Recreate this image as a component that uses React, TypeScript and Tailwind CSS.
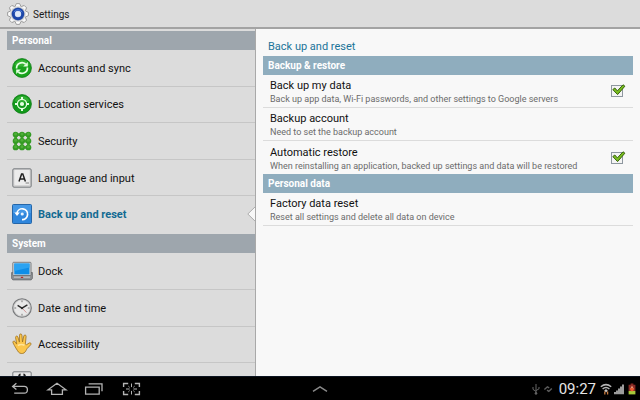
import { useState } from "react";
import type { ReactNode } from "react";

interface MenuItem {
  id: string;
  label: string;
  icon: ReactNode;
}

interface MenuSection {
  title: string;
  rows: string;
  items: MenuItem[];
}

function GearIcon() {
  const teeth = [0, 45, 90, 135, 180, 225, 270, 315];
  return (
    <svg viewBox="0 0 22 22" className="size-[22px] shrink-0" aria-hidden="true">
      <g fill="#fafafa" stroke="#8a8a8a" strokeWidth="0.8">
        {teeth.map((a) => (
          <path key={a} d="M7.6 4.4 9.4.6h3.2l1.8 3.8z" transform={`rotate(${a} 11 11)`} />
        ))}
      </g>
      <circle cx="11" cy="11" r="8.1" fill="#e2e2e2" />
      <circle cx="11" cy="11" r="6.8" fill="#a0a8b8" />
      <circle cx="11" cy="11" r="4.7" fill="#b9cdf0" stroke="#1c46a8" strokeWidth="3" />
      <path d="M6.8 9.4a4.6 4.6 0 0 1 8.4 0" fill="none" stroke="#4c7bdc" strokeWidth="1" />
      <circle cx="11" cy="11" r="2.8" fill="#dfe9f8" />
    </svg>
  );
}

function SyncIcon() {
  return (
    <svg viewBox="0 0 20 20" className="size-5" aria-hidden="true">
      <circle cx="10" cy="10" r="9.4" fill="#18a31c" stroke="#0c7a14" strokeWidth="0.8" />
      <path d="M2.5 7a8.2 8.2 0 0 1 15 0c-4 2-11 2-15 0" fill="#4fc44a" opacity="0.5" />
      <g fill="none" stroke="#e6ffe3" strokeWidth="1.7">
        <path d="M4.6 10.5A5.4 5.4 0 0 1 13.6 6" />
        <path d="M15.4 9.5A5.4 5.4 0 0 1 6.4 14" />
      </g>
      <path d="M15.8 4v4.6h-4.6zM4.2 16v-4.6h4.6z" fill="#e6ffe3" />
    </svg>
  );
}

function LocationIcon() {
  return (
    <svg viewBox="0 0 20 20" className="size-5" aria-hidden="true">
      <circle cx="10" cy="10" r="9.4" fill="#129a1b" stroke="#0c7a14" strokeWidth="0.8" />
      <path d="M2.5 7a8.2 8.2 0 0 1 15 0c-4 2-11 2-15 0" fill="#4fc44a" opacity="0.5" />
      <g fill="none" stroke="#e6ffe3">
        <circle cx="10" cy="10" r="4.6" strokeWidth="1.3" />
        <path d="M10 3v2.6M10 14.4V17M3 10h2.6M14.4 10H17" strokeWidth="2" />
      </g>
      <circle cx="10" cy="10" r="2.1" fill="#e6ffe3" />
    </svg>
  );
}

function SecurityIcon() {
  const points = [3.6, 10, 16.4];
  return (
    <svg viewBox="0 0 20 20" className="size-5" aria-hidden="true">
      <path
        d="M3.6 3.6h12.8v12.8H3.6zM10 3.6v12.8M3.6 10h12.8"
        fill="none"
        stroke="#46a52e"
        strokeWidth="2.8"
      />
      {points.map((y) =>
        points.map((x) => (
          <g key={`${x}-${y}`}>
            <circle cx={x} cy={y} r="2.9" fill="#349a24" />
            <circle cx={x} cy={y - 0.7} r="1.5" fill="#4fae38" />
          </g>
        ))
      )}
    </svg>
  );
}

function LanguageIcon() {
  return (
    <svg viewBox="0 0 20 20" className="size-5" aria-hidden="true">
      <rect x="0.8" y="0.8" width="18.4" height="18.4" rx="1.2" fill="#d4d4d4" stroke="#777b7f" />
      <rect x="2.4" y="2" width="15.2" height="15" rx="1" fill="#ececec" />
      <path d="M7 13.4 9.6 6h1.2l2.6 7.4M7.9 11h4.6" fill="none" stroke="#222" strokeWidth="1.5" />
      <path d="M13.6 15h3.4" stroke="#777" strokeWidth="0.9" />
    </svg>
  );
}

function BackupIcon() {
  return (
    <svg viewBox="0 0 20 20" className="size-5" aria-hidden="true">
      <rect x="0.5" y="0.5" width="19" height="19" rx="1" fill="#2f86dc" stroke="#2566a8" />
      <path d="M1 1h18v8H1z" fill="#55a5ec" opacity="0.6" />
      <path d="M4.9 9.2A5.4 5.4 0 1 1 10 15.6" fill="none" stroke="#fff" strokeWidth="1.7" />
      <path d="M2.4 8.4h5.4L5 12z" fill="#fff" />
      <circle cx="10.2" cy="10" r="1.6" fill="#e8f4ff" />
    </svg>
  );
}

function DockIcon() {
  return (
    <svg viewBox="0 0 22 20" className="h-5 w-[22px]" aria-hidden="true">
      <path d="M.6 11.5h20.8v5.8l-1.2 1.6H1.8L.6 17.3z" fill="#8d9094" stroke="#5c5f63" strokeWidth="0.7" />
      <rect x="1.8" y="1.3" width="18.2" height="13.2" rx="0.8" fill="#d5d8db" stroke="#63676b" strokeWidth="0.8" />
      <rect x="3.3" y="2.6" width="15.2" height="10.8" fill="#0f8ee8" />
      <path d="M3.3 2.6h15.2v4L3.3 10z" fill="#2ba3f2" />
      <path d="M3 15.4h16v1.6H3z" fill="#b4b7ba" />
      <path d="M9.8 16.4h2.4" stroke="#b3262a" strokeWidth="1.1" />
    </svg>
  );
}

function ClockIcon() {
  return (
    <svg viewBox="0 0 20 20" className="size-5" aria-hidden="true">
      <circle cx="10" cy="10" r="9.3" fill="#cdcdcd" stroke="#77797b" strokeWidth="1.1" />
      <circle cx="10" cy="10" r="7.8" fill="#e8e8e8" />
      <path d="M10 2.4v1.8M10 15.8v1.8M2.4 10h1.8M15.8 10h1.8" stroke="#777" strokeWidth="1" />
      <path d="M10 10.2 5.6 7.4M10 10.2l5.4-3.4" stroke="#2b2b2b" strokeWidth="1.4" />
      <path d="m10 10 4.4 4.6" stroke="#c98080" strokeWidth="0.8" />
      <circle cx="10" cy="10.1" r="1.2" fill="#2b2b2b" />
    </svg>
  );
}

function HandIcon() {
  return (
    <svg viewBox="0 0 20 22" className="h-[22px] w-5" aria-hidden="true">
      <path
        d="M6.6 19.2C4.8 16.8 2.8 13.4 1 9.8c-.7-1.5 1.2-2.4 2-1.2l1.7 2.5L3.6 4.6c-.3-1.7 1.9-2.1 2.3-.5l1.5 5L7.5 2.2c0-1.7 2.3-1.7 2.4 0l.6 6.8 1.3-6c.4-1.6 2.5-1.2 2.3.4l-.7 7.4c.2.9.8 1.2 1.4.7l2.4-1.5c1.4-.7 2.5.8 1.5 1.8l-3.6 3.8c-.9 1.3-1.4 3.2-3 4.3-1.6 1-4.2.8-5.5-.7z"
        fill="#fbc64c"
        stroke="#9c7020"
        strokeWidth="0.8"
      />
      <path d="M5.8 12.5c1.8-1 5-1.2 6.7-.2" fill="none" stroke="#ffe49a" strokeWidth="1.6" />
    </svg>
  );
}

function DeveloperIcon() {
  return (
    <svg viewBox="0 0 20 20" className="size-5" aria-hidden="true">
      <rect x="0.8" y="0.8" width="18.4" height="18.4" rx="1.2" fill="#e4e4e4" stroke="#777b7f" />
      <path
        d="M8.6 3.6c-3 0-.6 5.2-3.2 6.2 2.6 1 .2 6.2 3.2 6.2M11.4 3.6c3 0 .6 5.2 3.2 6.2-2.6 1-.2 6.2-3.2 6.2"
        fill="none"
        stroke="#222"
        strokeWidth="2"
      />
    </svg>
  );
}

const sections: MenuSection[] = [
  {
    title: "Personal",
    rows: "h-[182px]",
    items: [
      { id: "accounts", label: "Accounts and sync", icon: <SyncIcon /> },
      { id: "location", label: "Location services", icon: <LocationIcon /> },
      { id: "security", label: "Security", icon: <SecurityIcon /> },
      { id: "language", label: "Language and input", icon: <LanguageIcon /> },
      { id: "backup", label: "Back up and reset", icon: <BackupIcon /> },
    ],
  },
  {
    title: "System",
    rows: "h-[146px]",
    items: [
      { id: "dock", label: "Dock", icon: <DockIcon /> },
      { id: "date", label: "Date and time", icon: <ClockIcon /> },
      { id: "accessibility", label: "Accessibility", icon: <HandIcon /> },
      { id: "developer", label: "", icon: <DeveloperIcon /> },
    ],
  },
];

interface MenuRowProps {
  item: MenuItem;
  active: boolean;
  last: boolean;
  onSelect: (id: string) => void;
}

function MenuRow({ item, active, last, onSelect }: MenuRowProps) {
  return (
    <li className={`relative flex flex-1 ${last ? "" : "border-b border-[#c6c6c6]"}`}>
      <button
        type="button"
        aria-label={item.label || "Developer options"}
        onClick={() => onSelect(item.id)}
        className={`flex w-full items-center gap-[5px] pl-1 text-left text-[11px] leading-4 ${
          active ? "font-bold text-[#136a92]" : "text-[#111]"
        }`}
      >
        <span className="flex w-[22px] shrink-0 justify-center">{item.icon}</span>
        <span className="pt-0.5">{item.label}</span>
      </button>
      {active && (
        <svg
          viewBox="0 0 9 16"
          className="absolute top-1/2 -right-px h-4 w-[9px] -translate-y-1/2"
          aria-hidden="true"
        >
          <path d="M9 0 .8 8 9 16z" fill="#f8f8f8" />
          <path d="M9 0 .8 8 9 16" fill="none" stroke="#a5a5a5" strokeWidth="0.9" />
        </svg>
      )}
    </li>
  );
}

interface PreferenceProps {
  title: string;
  summary: string;
  border?: boolean;
}

function PreferenceText({ title, summary }: PreferenceProps) {
  return (
    <span className="block min-w-0 flex-1 pt-0.5 text-left">
      <span className="block text-[11px] leading-[14px] text-[#111]">{title}</span>
      <span className="block text-[9px] leading-3 text-[#6b6b6b]">{summary}</span>
    </span>
  );
}

function Preference({ title, summary, border = true }: PreferenceProps) {
  return (
    <button
      type="button"
      className={`flex h-[33px] w-full items-center px-[7px] ${border ? "border-b border-[#dcdcdc]" : ""}`}
    >
      <PreferenceText title={title} summary={summary} />
    </button>
  );
}

function CheckPreference({ title, summary, border = true }: PreferenceProps) {
  const [checked, setChecked] = useState(true);

  return (
    <label
      className={`flex h-[33px] items-center pr-1.5 pl-[7px] ${border ? "border-b border-[#dcdcdc]" : ""}`}
    >
      <PreferenceText title={title} summary={summary} />
      <span className="relative flex size-4 shrink-0 items-center">
        <input
          type="checkbox"
          checked={checked}
          onChange={(e) => setChecked(e.target.checked)}
          className="size-3 appearance-none border border-[#8e979f] bg-[#f4f4f4]"
        />
        {checked && (
          <svg
            viewBox="0 0 16 16"
            className="pointer-events-none absolute inset-0 size-4"
            aria-hidden="true"
          >
            <path
              d="M1.8 6.6 3.8 5l2.6 2.9L12 1.8l1.9 1.4-7.3 8.4z"
              fill="#79bd1f"
              stroke="#36610c"
              strokeWidth="1"
              strokeLinejoin="round"
            />
          </svg>
        )}
      </span>
    </label>
  );
}

function GroupTitle({ children }: { children: ReactNode }) {
  return (
    <h3 className="h-[19px] bg-[#8fadbe] px-[5px] text-[10px] leading-5 font-bold text-white">
      {children}
    </h3>
  );
}

function NavBar() {
  return (
    <footer className="grid h-6 shrink-0 grid-cols-[1fr_auto_1fr] items-center border-t border-[#0b1420] bg-black">
      <nav className="flex items-center gap-[15px] pl-[9px]">
        <button type="button" aria-label="Back">
          <svg viewBox="0 0 22 16" className="h-4 w-[22px]" fill="none" stroke="#b4b4b4" strokeWidth="1.3">
            <path d="M7.4 2.2 3.6 5.4l3.8 3.2M3.8 5.4h11.4q3.2 0 3.2 3.3 0 3.5-3.2 3.5H5.2" />
          </svg>
        </button>
        <button type="button" aria-label="Home">
          <svg viewBox="0 0 22 16" className="h-4 w-[22px]" fill="none" stroke="#b4b4b4" strokeWidth="1.3">
            <path d="M11 2.2 2 8.8h3.6v4.6h10.8V8.8H20z" />
          </svg>
        </button>
        <button type="button" aria-label="Recent apps">
          <svg viewBox="0 0 22 16" className="h-4 w-[22px]" fill="none" stroke="#b4b4b4" strokeWidth="1.3">
            <path d="M2.6 6.2h13.6v7H2.6zM5.6 2.8H19v7.4" />
          </svg>
        </button>
        <button type="button" aria-label="Screenshot">
          <svg viewBox="0 0 22 16" className="h-4 w-[22px]" fill="none" stroke="#b4b4b4" strokeWidth="1.4">
            <path d="M3.6 6V2.5h4.6M14.8 2.5h4.6V6M19.4 10v3.5h-4.6M8.2 13.5H3.6V10" />
            <path
              d="M11.5 2.5v3.6M11.5 9.9v3.6M6 8h3.6M13.4 8H17M8.4 5.2l1.2 1.1M14.6 5.2l-1.2 1.1M8.4 10.8l1.2-1.1M14.6 10.8l-1.2-1.1"
              strokeWidth="1"
            />
          </svg>
        </button>
      </nav>
      <button type="button" aria-label="Mini apps">
        <svg viewBox="0 0 16 8" className="h-2 w-4" fill="none" stroke="#8a8a8a" strokeWidth="1.4">
          <path d="m1 6.4 7-4.6 7 4.6" />
        </svg>
      </button>
      <div className="flex items-center justify-end gap-0.5 pr-1">
        <svg viewBox="0 0 10 12" className="h-3 w-2.5" fill="none" stroke="#666" aria-hidden="true">
          <path d="M5 1v10M2 4v2.4l3 2M8 4v1.8L5 7.6" />
          <circle cx="5" cy="10.4" r="0.9" fill="#666" />
        </svg>
        <svg viewBox="0 0 10 12" className="mr-1 h-3 w-2.5" fill="none" stroke="#5e5e5e" strokeWidth="1.4" aria-hidden="true">
          <path d="M1.4 6.6 4.4 3.8l1.8 1M8.8 5.4 5.8 8.4 4 7.2" />
        </svg>
        <time className="text-[15px] leading-5 text-[#e6e6e6]">09:27</time>
        <svg viewBox="0 0 12 12" className="ml-0.5 size-3" fill="none" aria-hidden="true">
          <path d="M.8 3.8q5.2-4.4 10.4 0M2.6 6q3.4-3 6.8 0" stroke="#b5b5b5" strokeWidth="1.5" />
          <path d="M6 6 7.8 7.8 6 9.6 4.2 7.8z" fill="#c5c5c5" />
          <path d="M4.8 11.6V8.6M7.6 8.4v3.2" stroke="#c97b3f" strokeWidth="1.3" />
        </svg>
        <svg viewBox="0 0 10 12" className="h-3 w-2.5" fill="#c4c4c4" aria-hidden="true">
          <path d="M.2 9h1.6v2.2H.2zM2.2 7.4h1.6v3.8H2.2zM4.2 5.4h1.6v5.8H4.2zM6.2 3.4h1.6v7.8H6.2zM8.2 1.4h1.6v9.8H8.2z" />
        </svg>
        <svg viewBox="0 0 8 12" className="ml-0.5 h-3 w-2" aria-hidden="true">
          <path d="M2.6.6h2.8v1.2h2V8H.6V1.8h2z" fill="#8a2a24" />
          <path d="M.6 8h6.8v3.4H.6z" fill="#a8c93a" />
          <path d="M4 2.4 2.2 6h3.6z" fill="#f0a080" />
          <circle cx="4" cy="6.6" r="1.8" fill="#ee5a2e" />
        </svg>
      </div>
    </footer>
  );
}

export default function App() {
  const [selected, setSelected] = useState("backup");

  return (
    <div className="flex h-screen flex-col overflow-hidden bg-[#dcdcdc] font-[Roboto,sans-serif]">
      <header className="flex h-[29px] shrink-0 items-center gap-1 border-b-2 border-[#a3a3a3] pl-[7px]">
        <GearIcon />
        <h1 className="pt-0.5 text-[10px] leading-4 text-[#1a1a1a]">Settings</h1>
      </header>

      <div className="flex min-h-0 flex-1">
        <aside className="w-2/5 overflow-hidden border-r border-[#a9a9a9] pl-[7px]">
          {sections.map((section) => (
            <section key={section.title} className="pt-0.5">
              <h2 className="h-[19px] bg-[#9ea6ad] px-[5px] text-[10px] leading-5 font-bold text-white">
                {section.title}
              </h2>
              <ul className={`flex flex-col ${section.rows}`}>
                {section.items.map((item, i) => (
                  <MenuRow
                    key={item.id}
                    item={item}
                    active={item.id === selected}
                    last={i === section.items.length - 1}
                    onSelect={setSelected}
                  />
                ))}
              </ul>
            </section>
          ))}
        </aside>

        <main className="min-w-0 flex-1 bg-[#f8f8f8] px-[7px]">
          <h2 className="px-[5px] pt-2.5 pb-px text-[11px] leading-4 text-[#1b7499]">
            Back up and reset
          </h2>
          <GroupTitle>Backup &amp; restore</GroupTitle>
          <CheckPreference
            title="Back up my data"
            summary="Back up app data, Wi-Fi passwords, and other settings to Google servers"
          />
          <Preference title="Backup account" summary="Need to set the backup account" />
          <CheckPreference
            title="Automatic restore"
            summary="When reinstalling an application, backed up settings and data will be restored"
            border={false}
          />
          <GroupTitle>Personal data</GroupTitle>
          <Preference title="Factory data reset" summary="Reset all settings and delete all data on device" />
        </main>
      </div>

      <NavBar />
    </div>
  );
}
